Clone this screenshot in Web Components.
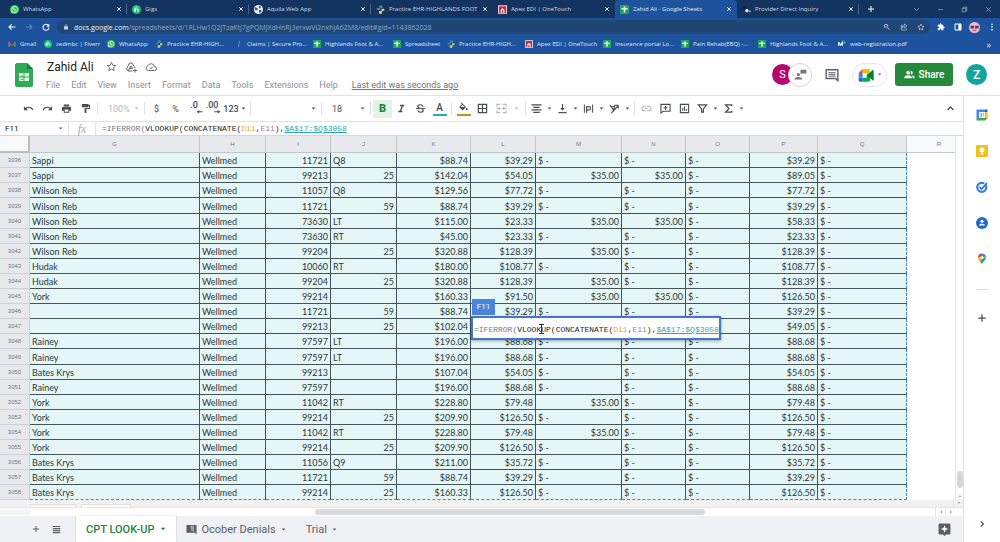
<!DOCTYPE html>
<html lang="en">
<head>
<meta charset="utf-8">
<title>Zahid Ali - Google Sheets</title>
<style>
html,body{margin:0}
body{font-family:Roboto,"Liberation Sans",sans-serif;background:#fff;color:#3c4043}
</style>
</head>
<body>
<sheets-app></sheets-app>
<script>
const ICONS = {
  close:'<path d="M5 5l14 14M19 5L5 19" stroke="currentColor" stroke-width="4" fill="none"/>',
  plus:'<path d="M12 3v18M3 12h18" stroke="currentColor" stroke-width="3" fill="none"/>',
  minus:'<path d="M4 12h16" stroke="currentColor" stroke-width="2"/>',
  restore:'<path d="M4 8h12v12H4zM8 8V4h12v12h-4" stroke="currentColor" stroke-width="2" fill="none"/>',
  x:'<path d="M4 4l16 16M20 4L4 20" stroke="currentColor" stroke-width="2" fill="none"/>',
  down:'<path d="M4 8l8 8 8-8" stroke="currentColor" stroke-width="2.4" fill="none"/>',
  up:'<path d="M4 16l8-8 8 8" stroke="currentColor" stroke-width="3.4" fill="none"/>',
  right:'<path d="M8 4l8 8-8 8" stroke="currentColor" stroke-width="3.4" fill="none"/>',
  caret:'<path d="M3 7h18l-9 10z"/>',
  caretup:'<path d="M3 17h18l-9-10z"/>',
  caretleft:'<path d="M17 3v18l-10-9z"/>',
  caretright:'<path d="M7 3v18l10-9z"/>',
  back:'<path d="M22 12H3M11 4l-8 8 8 8" stroke="currentColor" stroke-width="3.2" fill="none"/>',
  fwd:'<path d="M2 12h19M13 4l8 8-8 8" stroke="currentColor" stroke-width="3.2" fill="none"/>',
  reload:'<path d="M19 7a9 9 0 1 0 2 7" stroke="currentColor" stroke-width="3.2" fill="none"/><path d="M22 2v9h-9z"/>',
  lock:'<path d="M18 9h-1V7A5 5 0 0 0 7 7v2H6a2 2 0 0 0-2 2v9c0 1 1 2 2 2h12c1 0 2-1 2-2v-9a2 2 0 0 0-2-2zM9 7a3 3 0 0 1 6 0v2H9z"/>',
  zoomout:'<path d="M15.5 14h-.8l-.3-.3A6.5 6.5 0 1 0 13.700 14.400l.3.300v.8l5 5 1.500-1.500zM9.500 14a4.500 4.500 0 1 1 0-9 4.500 4.500 0 0 1 0 9zM7 9h5v1.200H7z"/>',
  share:'<path d="M8 6H4v15h15v-5M14 3l7 6-7 6v-4c-4 0-6 1-8 5 0-6 3-9 8-9z" stroke="currentColor" stroke-width="2" fill="none"/>',
  star:'<path d="M12 3l2.700 6.300 6.800.6-5.200 4.500 1.600 6.700L12 17.500l-5.900 3.600 1.600-6.700L2.500 9.900l6.800-.6z" stroke="currentColor" stroke-width="2" fill="none"/>',
  puzzle:'<path d="M20.500 11H19V7a2 2 0 0 0-2-2h-4V3.500a2.500 2.500 0 0 0-5 0V5H4a2 2 0 0 0-2 2v3.800h1.500a2.700 2.700 0 0 1 0 5.400H2V20c0 1.100.9 2 2 2h3.800v-1.500a2.700 2.700 0 0 1 5.400 0V22H17a2 2 0 0 0 2-2v-4h1.500a2.500 2.500 0 0 0 0-5z"/>',
  panel:'<path d="M3 3h18v18H3z" stroke="currentColor" stroke-width="3" fill="none"/><path d="M13 3h8v18h-8z"/>',
  dots:'<circle cx="12" cy="4" r="2.500"/><circle cx="12" cy="12" r="2.500"/><circle cx="12" cy="20" r="2.500"/>',
  face:'<circle cx="12" cy="12" r="12" fill="#efb8cd"/><path d="M3 8h8v6H3zM13 8h8v6h-8z" fill="#5e3a52"/><path d="M8 18h8" stroke="#a04060" stroke-width="2"/>',
  whatsapp:'<circle cx="12" cy="12" r="12" fill="#2fc351"/><path d="M4 20l1.500-4.500A8 8 0 1 1 9 19z" fill="none" stroke="#fff" stroke-width="2"/><path d="M8.500 7.500c-1 3 3.500 8.500 7 8l1-2-2.500-1.500-1 1c-1-.5-2-1.600-2.500-2.800l.9-1L10.500 7z" fill="#fff"/>',
  fiverr:'<circle cx="12" cy="12" r="12" fill="#1dbf73"/><path d="M7 18v-7M5 11h11.500v7M9 18v-9c0-2.500 2-3 5-2.600" fill="none" stroke="#fff" stroke-width="2.400"/>',
  globe:'<circle cx="12" cy="12" r="12" fill="#f1f5fa"/><path d="M3 6l6 2 1 4-4 3-4-4zM13 2l6 3-2 4-4-1zM13 13l6 0 1 4-5 5-2-4z" fill="#32517c"/>',
  plusmed:'<path d="M9 1h8v7h-5v5H2V8h7z" fill="#4d86bd"/><path d="M13 10h9v6h-6v7H8v-7h5z" fill="#d9cf55"/><path d="M10 9h5v6h-5z" fill="#1d3d68"/>',
  apex:'<path d="M0 1h24v22H0z" fill="#fff"/><path d="M2 3h20v18h-5v-8l-5-5-5 5v8H2z" fill="#c92b45"/><path d="M10 14h4v7h-4z" fill="#c92b45"/>',
  sheet:'<path d="M0 0h24v24H0z" fill="#1fa556"/><path d="M12 4v16M4 10h16" stroke="#fff" stroke-width="4"/>',
  pdd:'<circle cx="6" cy="8" r="4" fill="#0b1d33"/><circle cx="13" cy="15" r="4.500" fill="#f2f2f2"/><circle cx="21" cy="17" r="3" fill="#7b99bd"/>',
  gmail:'<path d="M1 5h5v15H1z" fill="#4a86e8"/><path d="M18 5h5v15h-5z" fill="#34a853"/><path d="M1 5l11 9 11-9v5l-11 9L1 10z" fill="#ea4335"/>',
  slash:'<path d="M14 3l-4 18" stroke="#6d97cf" stroke-width="2.500"/>',
  web:'<path d="M2 6v12M2 7l6 8 5-8v11" fill="none" stroke="#e9f5ee" stroke-width="3.500"/><path d="M16 4h7v7h-7z" fill="#36b56c"/>',
  drive:'<path d="M9 4h5l6 10M9 4L3 16l3 4h9M6 20l6-10 3 5M9 15h6" fill="none" stroke="currentColor" stroke-width="2"/><path d="M20 15v8M16 19h8" stroke="currentColor" stroke-width="2"/>',
  cloud:'<path d="M7 19a5 5 0 0 1-1-9.800A7 7 0 0 1 19 11a4 4 0 0 1 0 8z" fill="none" stroke="currentColor" stroke-width="2"/><path d="M9 13.500l2.500 2.500 4-4.500" fill="none" stroke="currentColor" stroke-width="2"/>',
  comment:'<path d="M2 3h20v19l-4-4H2z" fill="none" stroke="currentColor" stroke-width="2.400"/><path d="M6 8h12M6 11h12M6 14h12" stroke="currentColor" stroke-width="1.700"/>',
  chat:'<circle cx="8" cy="12" r="3"/><path d="M1 21c0-6 14-6 14 0zM12 3h11v7H14l-2 2z"/>',
  meet:'<path d="M1 9l6-6v6z" fill="#ea4335"/><path d="M1 9h6v7H1z" fill="#4285f4"/><path d="M1 16h6v6H3a2 2 0 0 1-2-2z" fill="#1967d2"/><path d="M7 3h9a2 2 0 0 1 2 2v6l-5 2V9H7z" fill="#fbbc04"/><path d="M7 16h6v-4l5-1v9a2 2 0 0 1-2 2H7z" fill="#00ac47"/><path d="M13 12.500l9-8c1 0 1.500.3 1.500 1v14c0 1-1 1-1.500.5z" fill="#00832d"/>',
  people:'<circle cx="9" cy="8" r="4"/><path d="M1 20v-2c0-6 16-6 16 0v2z"/><path d="M15 4a4 4 0 0 1 0 8zM19 20v-2c0-2-1-3.500-2-4.500 3 .5 6 2 6 4.500v2z"/>',
  undo:'<path d="M12.500 8C9.850 8 7.450 9 5.600 10.600L2 7v9h9l-3.600-3.600A8 8 0 0 1 20.100 16l2.400-.8A10.500 10.500 0 0 0 12.500 8z"/>',
  redo:'<path d="M11.500 8c2.650 0 5.050 1 6.900 2.600L22 7v9h-9l3.600-3.600A8 8 0 0 0 3.900 16l-2.400-.8A10.500 10.500 0 0 1 11.500 8z"/>',
  print:'<path d="M19 8H5a3 3 0 0 0-3 3v6h4v4h12v-4h4v-6a3 3 0 0 0-3-3zm-3 11H8v-5h8zM6 3h12v4H6z"/>',
  paint:'<path d="M18 4V2H4v7h14V7h2v4H10v11h4v-9h8V4z"/>',
  decless:'<path d="M2 6l9-6v4.500h12v3H11V12z"/>',
  decmore:'<path d="M22 6l-9-6v4.500H1v3h12V12z"/>',
  italic:'<path d="M9 4v3h3l-3.500 10H5v3h9v-3h-2.500L15 7h3V4z"/>',
  strike:'<path d="M2 11h20v2.200H2z"/><path d="M17 8c0-6-11-5-11-.5 0 2 2 3 4 3.500M7 16c0 6 11 5 11 .5 0-1.500-.6-2.300-1.500-3" fill="none" stroke="currentColor" stroke-width="2.600"/>',
  fill:'<path d="M16.600 10L7.600 1 6.200 2.400l2.400 2.400-5.200 5.100c-.6.6-.6 1.500 0 2.100l5.500 5.500c.6.6 1.500.6 2.100 0l5.600-5.500c.6-.5.6-1.500 0-2zM5.200 11L10 6.200 14.800 11zM19 12.500s-2 2.200-2 3.500a2 2 0 0 0 4 0c0-1.300-2-3.500-2-3.500z"/>',
  borders:'<path d="M3 3h18v18H3zM12 3v18M3 12h18" fill="none" stroke="currentColor" stroke-width="2.600"/>',
  merge:'<path d="M2 8V3h7M15 3h7v5M22 16v5h-7M9 21H2v-5M1 12h7M23 12h-7M6 9l3 3-3 3M18 9l-3 3 3 3" fill="none" stroke="currentColor" stroke-width="2.200"/>',
  align:'<path d="M1 4h22M5 9.500h14M1 15h22M5 20.500h14" stroke="currentColor" stroke-width="2.400"/>',
  valign:'<path d="M3 21h18" stroke="currentColor" stroke-width="2.600"/><path d="M12 2v11" stroke="currentColor" stroke-width="2.400"/><path d="M7 11h10l-5 6z"/>',
  wrap:'<path d="M3 3v18M21 3v18" stroke="currentColor" stroke-width="2.200"/><path d="M8 21V8h5a3.500 3.500 0 0 1 0 7H8" fill="none" stroke="currentColor" stroke-width="2.600"/>',
  rotate:'<path d="M2 4l8 12 3-12M4 8l9-1M5 22L20 6M20 12V5h-7" fill="none" stroke="currentColor" stroke-width="2.400"/>',
  link:'<path d="M11 7H7a5 5 0 0 0 0 10h4M13 7h4a5 5 0 0 1 0 10h-4M8 12h8" fill="none" stroke="currentColor" stroke-width="2.400"/>',
  addcomment:'<path d="M2 3h20v15H7l-5 4z" fill="none" stroke="currentColor" stroke-width="2.400"/><path d="M12 6v9M7.500 10.500h9" stroke="currentColor" stroke-width="2.200"/>',
  chart:'<path d="M3 3h18v18H3z" fill="none" stroke="currentColor" stroke-width="2.400"/><path d="M8 17v-6M12 17V7M16 17v-4" stroke="currentColor" stroke-width="2.400"/>',
  filter:'<path d="M3 4h18l-7 9v7h-4v-7z" fill="none" stroke="currentColor" stroke-width="2.600"/>',
  sigma:'<path d="M19 7V4H6l7 8-7 8h13v-3" fill="none" stroke="currentColor" stroke-width="3"/>',
  calendar:'<path d="M1 1h17v5H6v12H1z" fill="#4285f4"/><path d="M18 1h5v5h-5z" fill="#1967d2"/><path d="M18 6h5v12h-5z" fill="#fbbc04"/><path d="M6 18h12v5H1v-5z" fill="#34a853"/><path d="M18 18h5l-5 5z" fill="#ea4335"/><path d="M6 6h12v12H6z" fill="#fff"/><path d="M8 9h3v3H9h2v3H8M14 9h1.500v6" stroke="#4285f4" stroke-width="1.400" fill="none"/>',
  keep:'<rect width="24" height="24" rx="2" fill="#f2c01d"/><circle cx="12" cy="10" r="5" fill="#fff"/><path d="M9.500 16h5v3h-5z" fill="#fff"/>',
  tasks:'<circle cx="11.500" cy="12.500" r="9" fill="none" stroke="#2f7de9" stroke-width="4.500"/><path d="M7 12l4 4 9-11" fill="none" stroke="#fff" stroke-width="5.500"/><path d="M7 12l4 4L22 4" fill="none" stroke="#1f66d6" stroke-width="3.200"/>',
  contacts:'<circle cx="12" cy="12" r="12" fill="#2469cf"/><circle cx="12" cy="8.500" r="3.200" fill="#fff"/><path d="M6 17c0-5 12-5 12 0z" fill="#fff"/>',
  maps:'<path d="M12 1a8 8 0 0 1 8 8H12z" fill="#4285f4"/><path d="M12 1a8 8 0 0 0-8 8h8z" fill="#ea4335"/><path d="M4 9c0 3 1.500 5 3.500 7.500L14 9z" fill="#fbbc04"/><path d="M20 9c0 6-6 7-8 14-1-3-2.500-5-4.500-6.500L14 9z" fill="#34a853"/><circle cx="12" cy="9" r="3" fill="#fff"/>',
  list:'<path d="M2 4h20M2 9.500h20M2 15h20M2 20.500h20" stroke="currentColor" stroke-width="3.200"/>',
  note:'<path d="M1 2h22v21l-4-4H1z"/><path d="M10 6l3-1v10" fill="none" stroke="#eee" stroke-width="2"/><path d="M16.500 3v16" stroke="#ccc" stroke-width="1.500"/>',
  explore:'<path d="M3 1h18a2 2 0 0 1 2 2v16a2 2 0 0 1-2 2h-6l-3 3-3-3H3a2 2 0 0 1-2-2V3c0-1 1-2 2-2z"/><path d="M12 4l2 5 5 2-5 2-2 5-2-5-5-2 5-2z" fill="#fff"/>',
};
const BASE = `*{box-sizing:border-box}
button,input,select{font:inherit;color:inherit;background:none;border:0;padding:0;margin:0;outline:0;border-radius:0}
button{display:inline-flex;align-items:center;justify-content:center;white-space:nowrap}
a{color:inherit;text-decoration:none}
ui-icon{flex:none}`;
class Part extends HTMLElement {
  connectedCallback(){
    if (this.shadowRoot) return;
    this.attachShadow({mode:'open'}).innerHTML = `<style>${BASE}${this.styles()}</style>${this.markup()}`;
  }
  styles(){ return ''; }
  markup(){ return '<slot></slot>'; }
}
const icon = (name, size = 8) => `<ui-icon name="${name}" size="${size}"></ui-icon>`;

customElements.define('ui-icon', class extends Part {
  styles(){ const s = this.getAttribute('size'); return `:host{display:block;width:${s}px;height:${s}px}svg{display:block;width:100%;height:100%;fill:currentColor}`; }
  markup(){ return `<svg viewBox="0 0 24 24" aria-hidden="true">${ICONS[this.getAttribute('name')]}</svg>`; }
});

customElements.define('browser-tab', class extends Part {
  styles(){ return `:host{display:flex;flex:0 1 122px;min-width:0;align-items:center;gap:4px;padding:0 5px;height:18px;color:#cdd8e8;position:relative}
    :host([active]){background:#1c539c;border-radius:4px 4px 0 0;color:#e3ebf6}
    :host([line])::after{content:"";position:absolute;right:0;top:4px;height:10px;width:1px;background:#49658c}
    span{flex:1;min-width:0;overflow:hidden;white-space:nowrap}button{color:#e8eef7}`; }
  markup(){ return `${icon(this.getAttribute('icon'),9)}<span><slot></slot></span><button aria-label="Close tab">${icon('close',6)}</button>`; }
});

customElements.define('browser-tabs', class extends Part {
  styles(){ return `:host{display:flex;height:18px;background:#13345f;padding:0 0 0 5px;align-items:center;color:#dbe5f2;font:6px "Open Sans","Noto Sans",sans-serif}
    .new{width:23px;color:#fff}.space{flex:1}.win{width:24px;color:#b9c9df}`; }
  markup(){ return `<browser-tab icon="whatsapp" line>WhatsApp</browser-tab><browser-tab icon="fiverr" line>Gigs</browser-tab><browser-tab icon="globe" line>Aquila Web App</browser-tab><browser-tab icon="plusmed">Practice EHR-HIGHLANDS FOOT</browser-tab><browser-tab icon="apex">Apex EDI | OneTouch</browser-tab><browser-tab icon="sheet" active>Zahid Ali - Google Sheets</browser-tab><browser-tab icon="pdd" line>Provider Direct Inquiry</browser-tab>
    <button class="new" aria-label="New tab">${icon('plus',8)}</button><div class="space"></div>
    ${[['down','Search tabs'],['minus','Minimize'],['restore','Restore'],['x','Close']].map(b=>`<button class="win" aria-label="${b[1]}">${icon(b[0],7)}</button>`).join('')}`; }
});

customElements.define('address-bar', class extends Part {
  styles(){ return `:host{display:flex;height:18px;background:#1c539c;align-items:center;padding:0 0 0 3px;color:#fff;font:7px "Open Sans","Noto Sans",sans-serif}
    .nav{width:17px}.dim{color:#6287bb}
    .box{flex:1;display:flex;align-items:center;height:14px;border-radius:7px;background:#1f4674;margin:0 2px 0 3px;padding:0 3px 0 6px;gap:5px;color:#c5d2e3}
    .url{flex:1;color:#8ea6c4;white-space:nowrap;overflow:hidden}.url b{font-weight:400;color:#f0f4f9}
    .box button{width:12px}.ext{width:17px}`; }
  markup(){ return `<button class="nav" aria-label="Back">${icon('back')}</button><button class="nav dim" aria-label="Forward">${icon('fwd')}</button><button class="nav" aria-label="Reload">${icon('reload')}</button>
    <div class="box">${icon('lock',6)}<span class="url"><b>docs.google.com</b>/spreadsheets/d/1RLHw1Q2jTzaKtj7gPQMJXdHnRj3erxwVi2nxhJA6ZM8/edit#gid=1143862028</span>
    <button aria-label="Zoom">${icon('zoomout')}</button><button aria-label="Share page">${icon('share')}</button><button aria-label="Bookmark">${icon('star')}</button></div>
    <button class="ext" aria-label="Extensions">${icon('puzzle')}</button><button class="ext" aria-label="Side panel">${icon('panel')}</button><button class="ext" aria-label="Profile">${icon('face',11)}</button><button class="ext" aria-label="Menu">${icon('dots')}</button>`; }
});

customElements.define('bookmark-bar', class extends Part {
  styles(){ return `:host{display:grid;grid-template-columns:36px 63px 48px 80px 78px 80px 54px 78px 78px 78px 77px 80px 1fr auto;height:18px;background:#1c539c;align-items:center;padding:0 9px 2px 8px;color:#e0e8f3;font:6px "Open Sans","Noto Sans",sans-serif}
    a{display:flex;align-items:center;gap:4px;white-space:nowrap}button{font-size:9px}`; }
  markup(){ return [['gmail','Gmail'],['fiverr','zedmbc | Fiverr'],['whatsapp','WhatsApp'],['plusmed','Practice EHR-HIGH...'],['slash','Claims | Secure Pro...'],['sheet','Highlands Foot &amp; A...'],['sheet','Spreadsheet'],['plusmed','Practice EHR-HIGH...'],['apex','Apex EDI | OneTouch'],['sheet','Insurance portal Lo...'],['sheet','Pain Rehab(EBQ) -...'],['sheet','Highlands Foot &amp; A...'],['web','web-registration.pdf']]
    .map(b=>`<a href="#">${icon(b[0])}${b[1]}</a>`).join('')+'<button aria-label="More bookmarks">»</button>'; }
});

customElements.define('doc-header', class extends Part {
  styles(){ return `:host{display:flex;height:42px;background:#fff;border-bottom:1px solid #dfe1e5;padding:0 13px 0 15px;align-items:center}
    .logo{width:18px;height:24px;margin-right:13px}
    .mid{flex:1;display:flex;flex-direction:column;gap:2px}
    .title{display:flex;align-items:center;gap:8px;color:#5f6368;height:18px}
    h1{margin:0 4px 0 1px;font-weight:400;font-size:12px;line-height:18px;color:#202124}
    nav{display:flex;gap:11px;font-size:9px;line-height:14px;color:#8c8f93}
    nav .edit{margin-left:3px;text-decoration:underline;color:#6f7378}
    .right{display:flex;align-items:center;color:#5f6368}
    .av{width:21px;height:21px;border-radius:50%;color:#fff;font-size:11px;display:flex;align-items:center;justify-content:center}
    .s{background:#b5076b;margin-right:-5px}.z{background:#12a5a0;font-weight:500;font-size:12px}
    .chat{width:24px;height:24px;border-radius:50%;background:#fff;border:1px solid #d5d7db;color:#777}
    .note{width:40px}.meet{width:35px;height:24px;border:1px solid #e4e5e8;border-radius:12px;gap:3px;color:#4a7bd0}
    .share{width:58px;height:23px;margin:0 13px 0 8px;border-radius:3px;background:#24893b;color:#fff;font-size:10px;font-weight:500;gap:4px}`; }
  markup(){ return `<svg class="logo" viewBox="0 0 18 24" aria-hidden="true"><path d="M2 0h10l6 6v16a2 2 0 0 1-2 2H2a2 2 0 0 1-2-2V2c0-1 1-2 2-2z" fill="#2fab53"/><path d="M12 0l6 6h-6z" fill="#167a38"/><path d="M4 10h10v8H4z" fill="#e9f7ed"/><path d="M5.500 12.700h3v1h-3zM10 12.700h3M5.500 15.700h3v1h-3z" fill="#2fab53"/><path d="M4 14h10M9 10v8" stroke="#2fab53"/></svg>
    <div class="mid"><div class="title"><h1>Zahid Ali</h1><button aria-label="Star">${icon('star',11)}</button><button aria-label="Add to Drive">${icon('drive',12)}</button><button aria-label="Saved">${icon('cloud',12)}</button></div>
    <nav>${['File','Edit','View','Insert','Format','Data','Tools','Extensions','Help'].map(t=>`<a href="#">${t}</a>`).join('')}<a href="#" class="edit">Last edit was seconds ago</a></nav></div>
    <div class="right"><span class="av s">S</span><button class="chat" aria-label="Show chat">${icon('chat',13)}</button><button class="note" aria-label="Comments">${icon('comment',14)}</button><button class="meet" aria-label="Meet">${icon('meet',16)}${icon('caret',5)}</button><button class="share">${icon('people',11)}Share</button><span class="av z">Z</span></div>`; }
});

customElements.define('tool-bar', class extends Part {
  styles(){ return `:host{display:flex;align-items:center;height:26px;padding:0 3px 0 19px;border-bottom:1px solid #dfe1e5;color:#4a4d51;font-size:9px}
    button{width:19px;height:18px;flex:none}.drop{width:26px;gap:5px}.merge{width:31px;gap:7px}.fmt{width:27px;gap:2px;font-weight:500}
    i{width:1px;height:13px;background:#dfe1e5;flex:none;margin:0 2px}
    label{display:flex;align-items:center;padding:0 3px 0 8px}
    select{flex:1;min-width:0;appearance:none}
    .zoom{width:42px}.font{width:66px}.size{width:44px}
    .dim,.zoom{color:#b4b6b9}.on{background:#e3f4e7;color:#1c8a3c;font-weight:900;font-size:11px}
    .col{flex-direction:column;font-size:10px;font-weight:500;line-height:11px}.col::after{content:"";width:14px;height:2px;margin-top:1px;background:var(--c)}
    .num{flex-direction:column;width:18px;font-weight:500;line-height:9px}.num ui-icon{align-self:flex-end}
    .space{flex:1}`; }
  markup(){
    const b=(n,l,c='',s=11)=>`<button class="${c}" aria-label="${l}">${icon(n,s)}</button>`;
    const d=(n,l,c='drop')=>`<button class="${c}" aria-label="${l}">${icon(n,11)}${icon('caret',5)}</button>`;
    return b('undo','Undo')+b('redo','Redo')+b('print','Print')+b('paint','Paint format')+'<i></i>'+
    `<label class="zoom"><select aria-label="Zoom"><option>100%</option></select>${icon('caret',5)}</label><i></i>
    <button aria-label="Currency">$</button><button aria-label="Percent">%</button><button class="num" aria-label="Fewer decimals">.0${icon('decless',7)}</button><button class="num" aria-label="More decimals">.00${icon('decmore',7)}</button><button class="fmt">123${icon('caret',5)}</button><i></i>
    <label class="font"><select aria-label="Font"><option></option></select>${icon('caret',5)}</label><i></i>
    <label class="size"><select aria-label="Font size"><option>18</option></select>${icon('caret',5)}</label><i></i>
    <button class="on" aria-label="Bold">B</button>`+b('italic','Italic')+b('strike','Strikethrough')+`<button class="col" style="--c:#2fa9b5" aria-label="Text colour">A</button><i></i>
    <button class="col" style="--c:#b59a14" aria-label="Fill colour">${icon('fill',11)}</button>`+b('borders','Borders')+d('merge','Merge cells','merge dim')+'<i></i>'+
    d('align','Horizontal align')+d('valign','Vertical align')+d('wrap','Text wrapping')+d('rotate','Text rotation')+'<i></i>'+
    b('link','Insert link','dim')+b('addcomment','Insert comment')+b('chart','Insert chart')+d('filter','Filter','drop')+d('sigma','Functions')+'<div class="space"></div>'+b('up','Hide menus','',9); }
});

customElements.define('formula-text', class extends Part {
  styles(){ return `:host{font:8px "Liberation Mono",monospace;white-space:nowrap;color:#777}b{font-weight:400;color:#1b1b1b}.o{color:#e8a33d}.p{color:#9b7aa8}.t{color:#2fa9b5;text-decoration:underline}`; }
  markup(){ return `=IFERROR(<b>VLOOKUP(CONCATENATE(</b><span class="o">D11</span><b>,</b><span class="p">E11</span><b>),</b><span class="t">$A$17:$Q$3058</span>`; }
});

customElements.define('formula-bar', class extends Part {
  styles(){ return `:host{display:flex;align-items:center;height:14px;border-bottom:1px solid #d5d7da;font-size:8px;color:#222}
    label{display:flex;width:68px;align-items:center;padding:0 5px;color:#666}input{flex:1;min-width:0;color:#111}
    .fx{width:28px;border:solid #dfe1e5;border-width:0 1px;text-align:center;font:italic 12px "Liberation Serif",serif;line-height:12px;color:#a5a7aa;margin-right:6px}`; }
  markup(){ return `<label><input value="F11" aria-label="Name box">${icon('caret',5)}</label><span class="fx">fx</span><formula-text></formula-text>`; }
});

const ROWS = `Sappi|11721|Q8|88.74|39.29|||39.29
Sappi|99213|25|142.04|54.05|35.00|35.00|89.05
Wilson Reb|11057|Q8|129.56|77.72|||77.72
Wilson Reb|11721|59|88.74|39.29|||39.29
Wilson Reb|73630|LT|115.00|23.33|35.00|35.00|58.33
Wilson Reb|73630|RT|45.00|23.33|||23.33
Wilson Reb|99204|25|320.88|128.39|35.00||128.39
Hudak|10060|RT|180.00|108.77|||108.77
Hudak|99204|25|320.88|128.39|35.00||128.39
York|99214||160.33|91.50|35.00|35.00|126.50
|11721|59|88.74|39.29|||39.29
|99213|25|102.04||||49.05
Rainey|97597|LT|196.00|88.68|||88.68
Rainey|97597|LT|196.00|88.68|||88.68
Bates Krys|99213||107.04|54.05|||54.05
Rainey|97597||196.00|88.68|||88.68
York|11042|RT|228.80|79.48|35.00||79.48
York|99214|25|209.90|126.50|||126.50
York|11042|RT|228.80|79.48|35.00||79.48
York|99214|25|209.90|126.50|||126.50
Bates Krys|11056|Q9|211.00|35.72|||35.72
Bates Krys|11721|59|88.74|39.29|||39.29
Bates Krys|99214|25|160.33|126.50|||126.50`.split('\n').map(r=>r.split('|'));

customElements.define('data-grid', class extends Part {
  styles(){ return `:host{display:flex;position:relative;background:#fff}
    table{flex:1;width:100%;table-layout:fixed;border-collapse:separate;border-spacing:0;font:9px Lato,"Open Sans",sans-serif;line-height:12px;color:#2a3739}
    th,td{padding:0 2px;overflow:hidden;white-space:nowrap;text-align:left}
    thead th{height:17px;background:#e8e9ed;border:solid #c4c6ca;border-width:0 1px 1px 0;font:6px "Liberation Sans",sans-serif;text-align:center;color:#77797c}
    thead th:first-child{background:#f8f9fa;border:solid #bbbdc1;border-width:0 2px 2px 0}
    thead th:last-child{background:#f8f9fa;border-right:0;padding-left:18px}
    tbody th{background:#e8e9ed;border:solid #cfd1d5;border-width:0 1px 1px 0;font:6px "Liberation Sans",sans-serif;text-align:center;color:#77797c}
    tbody tr{height:15px}tbody tr:nth-child(10n+4){height:16px}
    td{background:#e5f6f6;border:solid #42555a;border-width:0 1px 1px 0;padding-top:2px}
    td.n{text-align:right}td.q{border-right:1px dashed #3d87d6}
    tr:last-child td{border-bottom:1px dashed #3d87d6}
    tbody td.r{background:#fff;border:0}
    .bar{width:8px;border-left:1px solid #e3e4e6;display:flex;flex-direction:column;align-items:center;justify-content:flex-end;color:#8a8c8f}
    .bar .thumb{width:6px;height:17px;border-radius:3px;background:#d5d7da;margin-bottom:3px}
    .bar button{width:7px;height:9px}
    .chip{position:absolute;left:472px;top:163px;width:23px;height:16px;background:#4a85dc;color:#fff;font-size:8px;line-height:16px;text-align:center}
    .edit{position:absolute;left:471px;top:180px;height:24px;padding:2px 0 0 1px;border:2px solid #3f77cf;background:#fff;display:flex;align-items:center;box-shadow:0 1px 3px #0005}
    .beam{position:absolute;left:539px;top:188px;width:5px;height:10px}`; }
  markup(){
    const cols=[30,170,66,65,66,74,65,86,64,64,68,89];
    const covered=i=>i===11;
    const money=v=>v?`<td class="n">$${v}</td>`:'<td>$ -</td>';
    return `<table><colgroup>${cols.map(w=>`<col style="width:${w}px">`).join('')}<col></colgroup>
    <thead><tr><th></th>${[...'GHIJKLMNOPQR'].map(c=>`<th scope="col">${c}</th>`).join('')}</tr></thead>
    <tbody>${ROWS.map((r,i)=>`<tr><th scope="row">${3036+i}</th><td>${r[0]}</td><td>Wellmed</td><td class="n">${r[1]}</td><td${/^\d/.test(r[2])?' class="n"':''}>${r[2]}</td>${money(r[3])}${covered(i)?'<td></td>'.repeat(4):[4,5,6].map(k=>money(r[k])).join('')+'<td>$ -</td>'}${money(r[7])}<td class="q">$ -</td><td class="r"></td></tr>`).join('')}</tbody></table>
    <div class="bar"><span class="thumb"></span><button aria-label="Scroll up">${icon('caretup',4)}</button></div>
    <div class="chip">F11</div><div class="edit"><formula-text></formula-text></div>
    <svg class="beam" viewBox="0 0 5 10" aria-hidden="true"><path d="M0 .5h5M2.500 0v10M0 9.500h5" stroke="#333" fill="none"/></svg>`; }
});

customElements.define('grid-scroll', class extends Part {
  styles(){ return `:host{display:block;color:#8a8c8f}
    .gap{height:8px;background:#f1f1f2;display:flex;align-items:flex-end;gap:5px;padding-left:30px;border-bottom:1px solid #e3e4e6}
    .gap span{height:3px;width:46px;background:#f8f8f8;border:1px solid #e0e0e1;border-bottom:0}.gap span+span{width:50px;background:#fff}.gap em{flex:1}
    .row{display:flex;height:8px;align-items:center;padding-right:8px}
    .track{flex:1;display:flex;height:6px;border-left:30px solid #f5f5f6}
    .track::before{content:"";flex:285}.track::after{content:"";flex:230}
    .track span{flex:390;border-radius:3px;background:#d8dade}
    button{width:10px;height:8px;border-left:1px solid #e3e4e6}`; }
  markup(){ return `<div class="gap"><span></span><span></span><em></em><button aria-label="Scroll down">${icon('caret',4)}</button></div><div class="row"><div class="track"><span></span></div><button aria-label="Scroll left">${icon('caretleft',4)}</button><button aria-label="Scroll right">${icon('caretright',4)}</button></div>`; }
});

customElements.define('sheet-tabs', class extends Part {
  styles(){ return `:host{display:flex;flex:1;min-height:26px;align-items:stretch;background:#f0f1f4;padding:0 12px 0 26px;color:#5b5e63;font-size:11px}
    .ic{width:20px}.tab{gap:5px;padding:0 10px}.on{margin-left:10px;background:#fff;color:#20863c;font-weight:500;font-size:10px;box-shadow:0 0 2px #0003}
    .space{flex:1}`; }
  markup(){ return `<button class="ic" aria-label="Add sheet">${icon('plus',8)}</button><button class="ic" aria-label="All sheets">${icon('list',9)}</button><button class="tab on">CPT LOOK-UP${icon('caret',6)}</button><button class="tab">${icon('note',11)}Ocober Denials${icon('caret',5)}</button><button class="tab">Trial${icon('caret',5)}</button><div class="space"></div><button aria-label="Explore">${icon('explore',13)}</button>`.replace('tab on"','tab on" style="font-size:11px"'); }
});

customElements.define('side-panel', class extends Part {
  styles(){ return `:host{display:flex;flex:0 0 37px;flex-direction:column;align-items:center;padding-top:1px;border-left:1px solid #dfe1e5;color:#44474a}
    button{height:36px;width:36px;flex:none}hr{width:13px;height:1px;border:0;background:#dadce0;margin:12px 0 10px}.space{flex:1}`; }
  markup(){ return [['calendar','Calendar'],['keep','Keep'],['tasks','Tasks'],['contacts','Contacts'],['maps','Maps']].map(b=>`<button aria-label="${b[1]}">${icon(b[0],12)}</button>`).join('')+`<hr><button aria-label="Get add-ons">${icon('plus',10)}</button><div class="space"></div><button aria-label="Hide side panel">${icon('right',8)}</button>`; }
});

customElements.define('sheets-app', class extends Part {
  styles(){ return `:host{display:flex;flex-direction:column;min-height:100vh}
    main{display:flex;flex:1}.work{flex:1;min-width:0;display:flex;flex-direction:column}`; }
  markup(){ return `<browser-tabs></browser-tabs><address-bar></address-bar><bookmark-bar></bookmark-bar><doc-header></doc-header>
    <main><div class="work"><tool-bar></tool-bar><formula-bar></formula-bar><data-grid></data-grid><grid-scroll></grid-scroll><sheet-tabs></sheet-tabs></div><side-panel></side-panel></main>`; }
});
</script>
</body>
</html>
